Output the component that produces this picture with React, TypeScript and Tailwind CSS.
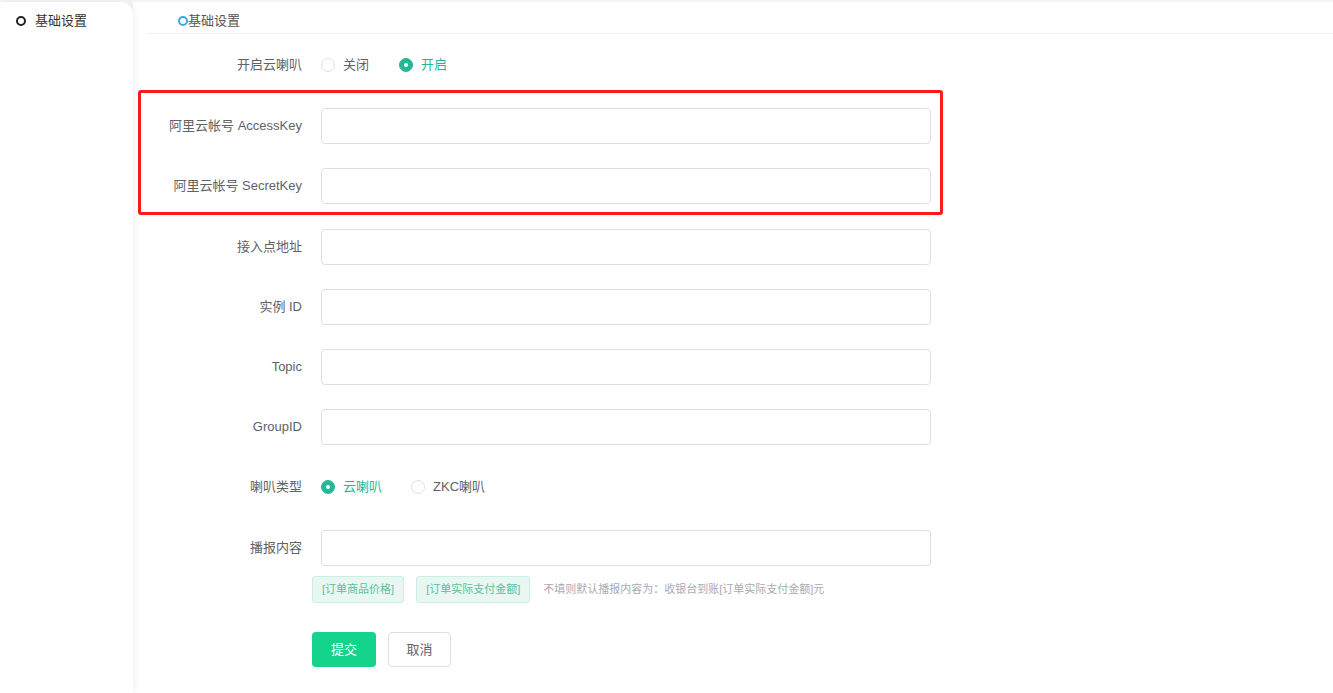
import React, { useState } from 'react';

const font = { fontFamily: '"Liberation Sans", "Noto Sans CJK SC", sans-serif' };

function Radio({ checked, label, onClick }: { checked: boolean; label: string; onClick: () => void }) {
  return (
    <label onClick={onClick} className="flex items-center cursor-pointer select-none">
      <span
        className={
          checked
            ? 'w-[14px] h-[14px] rounded-full bg-[#24b896] border border-[#24b896] flex items-center justify-center'
            : 'w-[14px] h-[14px] rounded-full bg-white border border-[#dcdfe6]'
        }
      >
        {checked && <span className="w-[4px] h-[4px] rounded-full bg-white" />}
      </span>
      <span className={checked ? 'ml-[8px] text-[13px] text-[#24b896]' : 'ml-[8px] text-[13px] text-[#606266]'}>{label}</span>
    </label>
  );
}

function Field({ label, className = '' }: { label: string; className?: string }) {
  return (
    <div className={'flex items-center h-[36px] ' + className}>
      <div className="w-[174px] pr-[19px] text-right text-[13px] text-[#606266] shrink-0">{label}</div>
      <input className="w-[610px] h-[36px] border border-[#dcdfe6] rounded-[4px] px-3 text-[13px] outline-none focus:border-[#24b896]" />
    </div>
  );
}

export default function App() {
  const [enabled, setEnabled] = useState(true);
  const [kind, setKind] = useState<'cloud' | 'zkc'>('cloud');

  return (
    <div className="min-h-screen bg-[#f5f5f5] pt-[2px] flex" style={font}>
      <aside className="w-[133px] shrink-0 bg-white rounded-tr-[12px] min-h-[691px] relative z-10 shadow-[2px_0_6px_rgba(0,0,0,0.06)]">
        <div className="flex items-center pl-[16px] pt-[9px]">
          <span className="w-[10px] h-[10px] rounded-full border-2 border-[#222]" />
          <span className="ml-[9px] text-[13px] text-[#333]">基础设置</span>
        </div>
      </aside>

      <main className="flex-1 bg-white pl-[14px] relative">
        <div className="h-[32px] border-b border-[#ebeef5] flex items-center pl-[31px] pt-[7px]">
          <span className="w-[10px] h-[10px] rounded-full border-2 border-[#3aa9e0]" />
          <span className="text-[13px] text-[#555]">基础设置</span>
        </div>

        <div className="pt-[13px]">
          <div className="flex items-center h-[36px]">
            <div className="w-[174px] pr-[19px] text-right text-[13px] text-[#606266] shrink-0">开启云喇叭</div>
            <div className="flex items-center gap-[30px]">
              <Radio checked={!enabled} label="关闭" onClick={() => setEnabled(false)} />
              <Radio checked={enabled} label="开启" onClick={() => setEnabled(true)} />
            </div>
          </div>

          <Field label="阿里云帐号 AccessKey" className="mt-[25px]" />
          <Field label="阿里云帐号 SecretKey" className="mt-[24px]" />
          <Field label="接入点地址" className="mt-[25px]" />
          <Field label="实例 ID" className="mt-[24px]" />
          <Field label="Topic" className="mt-[24px]" />
          <Field label="GroupID" className="mt-[24px]" />

          <div className="flex items-center h-[36px] mt-[24px]">
            <div className="w-[174px] pr-[19px] text-right text-[13px] text-[#606266] shrink-0">喇叭类型</div>
            <div className="flex items-center gap-[29px]">
              <Radio checked={kind === 'cloud'} label="云喇叭" onClick={() => setKind('cloud')} />
              <Radio checked={kind === 'zkc'} label="ZKC喇叭" onClick={() => setKind('zkc')} />
            </div>
          </div>

          <Field label="播报内容" className="mt-[25px]" />

          <div className="flex items-center mt-[10px] pl-[165px]">
            <span className="h-[27px] px-[9px] flex items-center rounded-[3px] bg-[#e8f7f2] border border-[#c9eee2] text-[11px] text-[#5bbf9f]">[订单商品价格]</span>
            <span className="ml-[12px] h-[27px] px-[9px] flex items-center rounded-[3px] bg-[#e8f7f2] border border-[#c9eee2] text-[11px] text-[#5bbf9f]">[订单实际支付金额]</span>
            <span className="ml-[13px] text-[11px] text-[#a8abb2]">不填则默认播报内容为：收银台到账[订单实际支付金额]元</span>
          </div>

          <div className="flex items-center mt-[29px] pl-[165px] gap-[12px]">
            <button className="w-[64px] h-[35px] rounded-[4px] bg-[#13d48a] text-white text-[13px]">提交</button>
            <button className="w-[63px] h-[35px] rounded-[4px] bg-white border border-[#dcdfe6] text-[#606266] text-[13px]">取消</button>
          </div>
        </div>

        <div className="absolute left-[5px] top-[88px] w-[805px] h-[125px] border-[3px] border-[#ff1a1a] rounded-[3px] pointer-events-none" />
      </main>
    </div>
  );
}
